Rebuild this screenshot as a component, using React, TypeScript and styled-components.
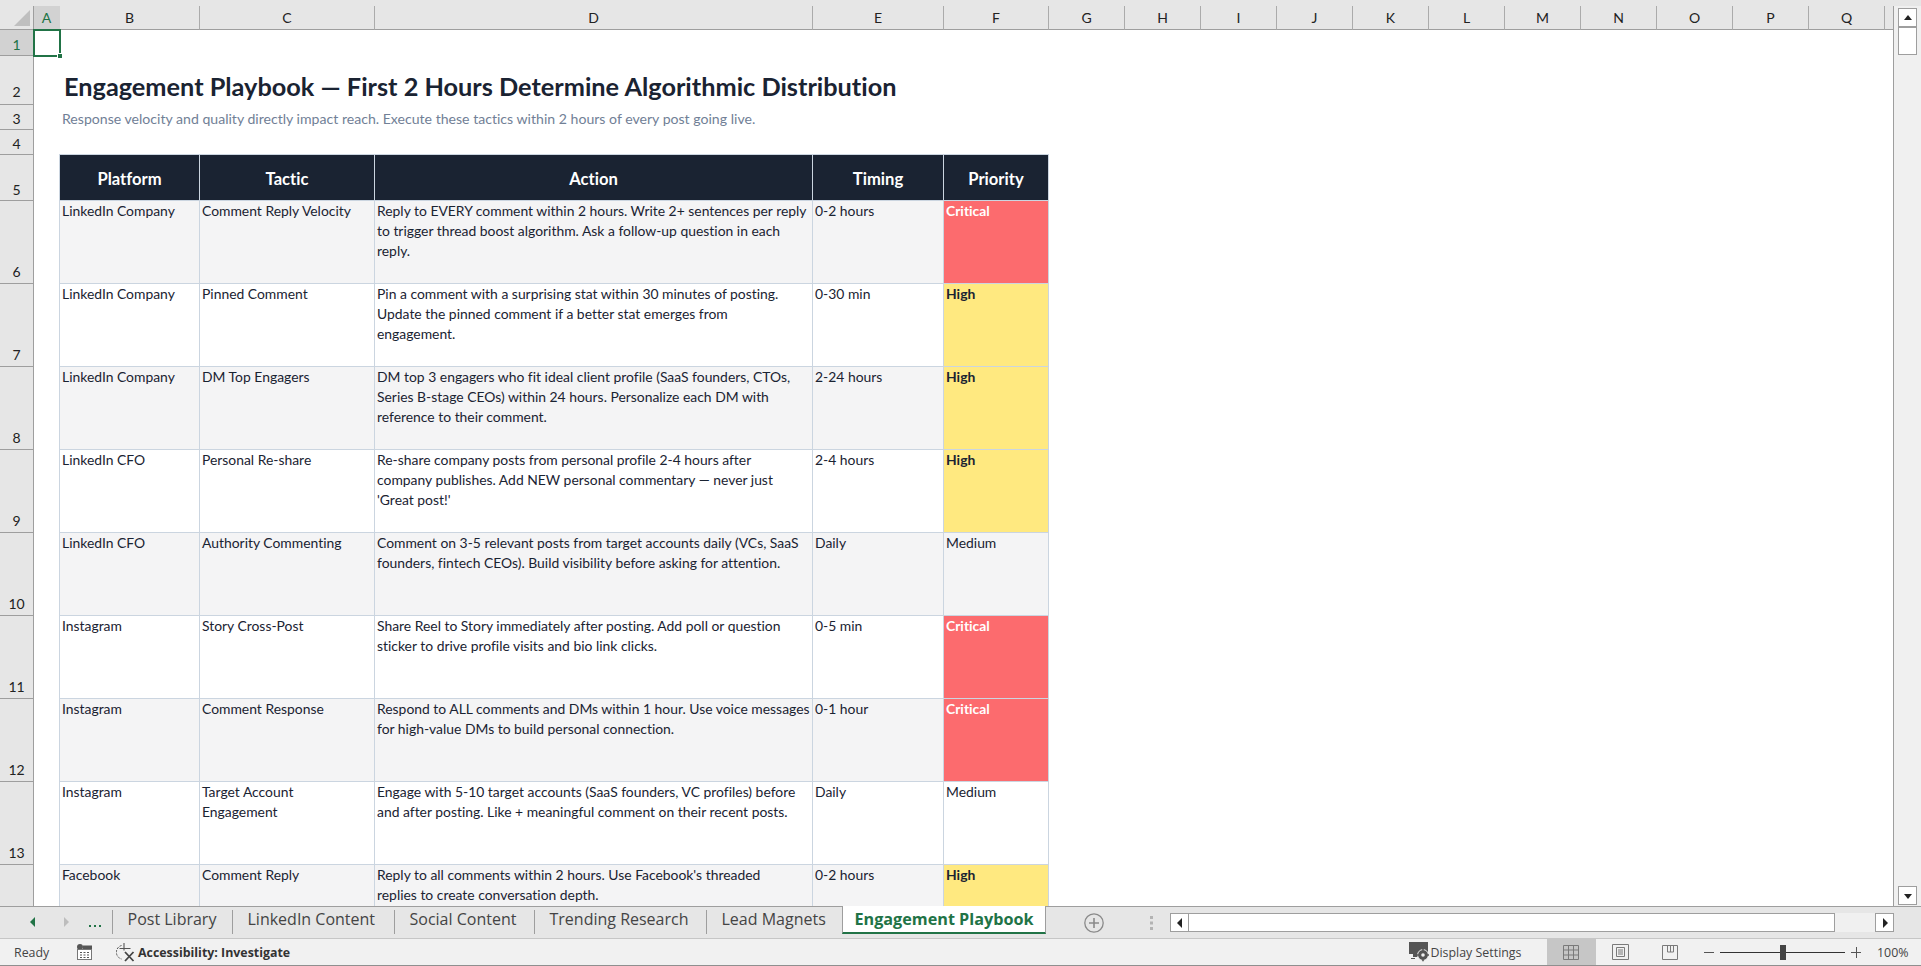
import React from 'react';
import styled, { createGlobalStyle, css } from 'styled-components';

const CELL_FONT = '"Lato", "Liberation Sans", sans-serif';
const UI_FONT = '"Open Sans", "Noto Sans", sans-serif';
const GREEN = '#217346';
const BORDER = '#cbd5e0';

type Priority = 'Critical' | 'High' | 'Medium';

interface IPlay {
    platform: string;
    tactic: string;
    action: string;
    timing: string;
    priority: Priority;
}

const COLUMNS = ['A', 'B', 'C', 'D', 'E', 'F', 'G', 'H', 'I', 'J', 'K', 'L', 'M', 'N', 'O', 'P', 'Q'];
const HEADINGS = ['Platform', 'Tactic', 'Action', 'Timing', 'Priority'];
const TABS = [
    { name: 'Post Library', width: 120 },
    { name: 'LinkedIn Content', width: 162 },
    { name: 'Social Content', width: 140 },
    { name: 'Trending Research', width: 172 },
    { name: 'Lead Magnets', width: 136 },
];

const PLAYS: IPlay[] = [
    {
        platform: 'LinkedIn Company',
        tactic: 'Comment Reply Velocity',
        action: 'Reply to EVERY comment within 2 hours. Write 2+ sentences per reply\nto trigger thread boost algorithm. Ask a follow-up question in each\nreply.',
        timing: '0-2 hours',
        priority: 'Critical',
    },
    {
        platform: 'LinkedIn Company',
        tactic: 'Pinned Comment',
        action: 'Pin a comment with a surprising stat within 30 minutes of posting.\nUpdate the pinned comment if a better stat emerges from\nengagement.',
        timing: '0-30 min',
        priority: 'High',
    },
    {
        platform: 'LinkedIn Company',
        tactic: 'DM Top Engagers',
        action: 'DM top 3 engagers who fit ideal client profile (SaaS founders, CTOs,\nSeries B-stage CEOs) within 24 hours. Personalize each DM with\nreference to their comment.',
        timing: '2-24 hours',
        priority: 'High',
    },
    {
        platform: 'LinkedIn CFO',
        tactic: 'Personal Re-share',
        action: "Re-share company posts from personal profile 2-4 hours after\ncompany publishes. Add NEW personal commentary — never just\n'Great post!'",
        timing: '2-4 hours',
        priority: 'High',
    },
    {
        platform: 'LinkedIn CFO',
        tactic: 'Authority Commenting',
        action: 'Comment on 3-5 relevant posts from target accounts daily (VCs, SaaS\nfounders, fintech CEOs). Build visibility before asking for attention.',
        timing: 'Daily',
        priority: 'Medium',
    },
    {
        platform: 'Instagram',
        tactic: 'Story Cross-Post',
        action: 'Share Reel to Story immediately after posting. Add poll or question\nsticker to drive profile visits and bio link clicks.',
        timing: '0-5 min',
        priority: 'Critical',
    },
    {
        platform: 'Instagram',
        tactic: 'Comment Response',
        action: 'Respond to ALL comments and DMs within 1 hour. Use voice messages\nfor high-value DMs to build personal connection.',
        timing: '0-1 hour',
        priority: 'Critical',
    },
    {
        platform: 'Instagram',
        tactic: 'Target Account\nEngagement',
        action: 'Engage with 5-10 target accounts (SaaS founders, VC profiles) before\nand after posting. Like + meaningful comment on their recent posts.',
        timing: 'Daily',
        priority: 'Medium',
    },
    {
        platform: 'Facebook',
        tactic: 'Comment Reply',
        action: "Reply to all comments within 2 hours. Use Facebook's threaded\nreplies to create conversation depth.",
        timing: '0-2 hours',
        priority: 'High',
    },
];

const GlobalStyle = createGlobalStyle`
    html, body {
        margin: 0;
        padding: 0;
        background: #e6e6e6;
    }
`;

const Window = styled.div`
    width: 1921px;
    height: 966px;
    display: flex;
    flex-direction: column;
    overflow: hidden;
    background: #e6e6e6;
`;

const Workspace = styled.div`
    flex: 0 0 907px;
    display: flex;
    padding-top: 6px;
    box-sizing: border-box;
    border-bottom: 1px solid #9e9e9e;
`;

const Sheet = styled.div`
    width: 1894px;
    height: 900px;
    overflow: hidden;
    display: grid;
    grid-template-columns: 34px 26px 140px 175px 438px 131px 105px repeat(11, 76px) 8px;
    grid-template-rows: 24px 26px 49px 25px 25px 46px repeat(9, 83px);
    background: #fff;
    border-right: 1px solid #9e9e9e;
    box-sizing: border-box;
    font-family: ${CELL_FONT};
    font-variant-ligatures: none;
`;

const Corner = styled.div`
    background: #e6e6e6;
    border-right: 1px solid #9e9e9e;
    border-bottom: 1px solid #9e9e9e;
    position: relative;

    &::after {
        content: '';
        position: absolute;
        right: 3px;
        bottom: 3px;
        border-style: solid;
        border-width: 0 0 16px 16px;
        border-color: transparent transparent #bfbfbf transparent;
    }
`;

const ColumnHeader = styled.div<{ $active?: boolean }>`
    display: flex;
    align-items: center;
    justify-content: center;
    font-size: 14px;
    color: ${(p) => (p.$active ? GREEN : '#222')};
    background: ${(p) => (p.$active ? '#d2d2d2' : '#e6e6e6')};
    border-right: 1px solid ${(p) => (p.$active ? '#d2d2d2' : '#ababab')};
    border-bottom: 1px solid ${(p) => (p.$active ? GREEN : '#9e9e9e')};
`;

const EndHeader = styled.div`
    background: #e6e6e6;
    border-bottom: 1px solid #9e9e9e;
`;

const RowHeader = styled.div<{ $active?: boolean; $raise?: number }>`
    display: flex;
    align-items: flex-end;
    justify-content: center;
    box-sizing: border-box;
    padding-bottom: ${(p) => p.$raise || 0}px;
    font-size: 14px;
    line-height: 20px;
    color: ${(p) => (p.$active ? GREEN : '#222')};
    background: ${(p) => (p.$active ? '#d2d2d2' : '#e6e6e6')};
    border-right: 1px solid #9e9e9e;
    border-bottom: 1px solid #9e9e9e;
`;

const Gutter = styled.div``;

const EmptyCells = styled.div<{ $from: number }>`
    grid-column: ${(p) => p.$from} / -1;
`;

const SelectedCell = styled.div`
    position: relative;

    &::before {
        content: '';
        position: absolute;
        left: -1px;
        top: -1px;
        right: -1px;
        bottom: -1px;
        border: 2px solid ${GREEN};
    }

    &::after {
        content: '';
        position: absolute;
        right: -3px;
        bottom: -3px;
        width: 6px;
        height: 6px;
        background: ${GREEN};
        border: 1px solid #fff;
        box-sizing: border-box;
    }
`;

const TitleCell = styled.div`
    grid-column: 3 / span 5;
    display: flex;
    align-items: flex-end;
    padding: 0 0 4px 4px;
    font-size: 25.3px;
    line-height: 30px;
    font-weight: 700;
    color: #1a2332;
    white-space: nowrap;
`;

const SubtitleCell = styled.div`
    grid-column: 3 / span 5;
    padding: 4px 0 0 2px;
    font-size: 14.1px;
    line-height: 20px;
    color: #718096;
    white-space: nowrap;
`;

const tableEdges = css<{ $first?: boolean }>`
    border-right: 1px solid ${BORDER};
    border-bottom: 1px solid ${BORDER};
    ${(p) => p.$first && `box-shadow: -1px 0 0 ${BORDER};`}
`;

const HeadingCell = styled.div<{ $first?: boolean }>`
    display: flex;
    align-items: center;
    justify-content: center;
    box-sizing: border-box;
    padding-top: 2px;
    font-size: 16.6px;
    font-weight: 700;
    color: #fff;
    background: #1a2332;
    border-top: 1px solid ${BORDER};
    margin-top: -1px;
    ${tableEdges}
`;

const BodyCell = styled.div<{ $first?: boolean; $striped?: boolean }>`
    padding: 0 2px;
    font-size: 13.9px;
    line-height: 20px;
    color: #1a2332;
    white-space: pre;
    overflow: hidden;
    background: ${(p) => (p.$striped ? '#f4f4f5' : '#fff')};
    ${tableEdges}
`;

const PriorityCell = styled(BodyCell)<{ $level: Priority }>`
    ${(p) =>
        p.$level === 'Critical' &&
        css`
            background: #fc6b6e;
            color: #fff;
            font-weight: 700;
        `}
    ${(p) =>
        p.$level === 'High' &&
        css`
            background: #ffe980;
            font-weight: 700;
        `}
`;

const VerticalBar = styled.div`
    flex: 1;
    display: flex;
    flex-direction: column;
    align-items: center;
    padding: 2px 0 1px;
    box-sizing: border-box;
    background: #f0f0f0;
`;

const ScrollButton = styled.div`
    width: 19px;
    height: 19px;
    flex: none;
    box-sizing: border-box;
    display: flex;
    align-items: center;
    justify-content: center;
    background: #fff;
    border: 1px solid #9e9e9e;
`;

const VerticalThumb = styled.div`
    width: 19px;
    height: 28px;
    box-sizing: border-box;
    background: #fff;
    border: 1px solid #9e9e9e;
    margin-bottom: auto;
`;

const TabBar = styled.div`
    flex: 0 0 31px;
    display: flex;
    align-items: flex-start;
    box-sizing: border-box;
    background: #e6e6e6;
    font-family: ${UI_FONT};
`;

const TabNav = styled.div`
    width: 112px;
    height: 24px;
    margin-top: 3px;
    flex: none;
    display: flex;
    align-items: center;
    box-sizing: border-box;
    padding-left: 30px;
`;

const NavArrow = styled.svg`
    flex: none;
    width: 5px;
    height: 10px;
    margin-right: 29px;
`;

const Ellipsis = styled.div`
    margin-left: -9px;
    display: flex;
    gap: 3px;
    margin-top: 8px;
`;

const EllipsisDot = styled.span`
    width: 2px;
    height: 2px;
    background: ${GREEN};
`;

const Tab = styled.div<{ $width: number }>`
    display: flex;
    align-items: center;
    flex: none;
    width: ${(p) => p.$width}px;
    height: 24px;
    margin-top: 3px;
    padding: 0 0 6px 14.5px;
    box-sizing: border-box;
    font-size: 16px;
    color: #444;
    border-left: 1px solid #9e9e9e;
    white-space: nowrap;
`;

const ActiveTab = styled.div`
    display: flex;
    align-items: center;
    justify-content: center;
    flex: none;
    width: 204px;
    height: 28px;
    margin-top: -1px;
    box-sizing: border-box;
    font-size: 16.2px;
    font-weight: 700;
    color: ${GREEN};
    background: #fff;
    border-left: 1px solid #9e9e9e;
    border-right: 1px solid #9e9e9e;
    border-bottom: 2px solid ${GREEN};
    white-space: nowrap;
`;

const SheetTools = styled.div`
    width: 124px;
    height: 20px;
    margin-top: 6px;
    flex: none;
    display: flex;
    align-items: center;
    gap: 46px;
    padding-left: 38px;
    box-sizing: border-box;
`;

const HorizontalBar = styled.div`
    width: 724px;
    height: 19px;
    margin-top: 6px;
    flex: none;
    display: flex;
    background: #f0f0f0;
`;

const HorizontalThumb = styled.div`
    width: 646px;
    height: 19px;
    box-sizing: border-box;
    background: #fff;
    border: 1px solid #9e9e9e;
    border-left: 0;
    margin-right: auto;
`;

const StatusBar = styled.div`
    flex: 0 0 28px;
    display: flex;
    align-items: center;
    box-sizing: border-box;
    padding-left: 14px;
    background: #f1f1f1;
    border-top: 1px solid #c6c6c6;
    border-bottom: 1px solid #8f8f8f;
    font-family: ${UI_FONT};
    font-size: 12.4px;
    color: #444;
`;

const Ready = styled.span`
    width: 63px;
    flex: none;
`;

const StatusIcon = styled.span<{ $gap?: number }>`
    display: flex;
    align-items: center;
    flex: none;
    margin-right: ${(p) => p.$gap || 0}px;
`;

const Accessibility = styled.span`
    font-weight: 700;
    color: #333;
    margin-left: 3px;
    font-size: 12.4px;
`;

const Spacer = styled.div`
    flex: 1;
`;

const DisplaySettings = styled.span`
    width: 116px;
    flex: none;
`;

const ViewButton = styled.div<{ $active?: boolean }>`
    width: 49.5px;
    flex: none;
    align-self: stretch;
    display: flex;
    align-items: center;
    justify-content: center;
    background: ${(p) => (p.$active ? '#c6c6c6' : 'transparent')};
`;

const ZoomBox = styled.div`
    display: flex;
    align-items: center;
    flex: none;
    margin-left: 9px;
    gap: 6px;
`;

const ZoomStep = styled.span`
    width: 10px;
    height: 11px;
    flex: none;
    position: relative;

    &::before {
        content: '';
        position: absolute;
        left: 0;
        right: 0;
        top: 5px;
        height: 1px;
        background: #555;
    }
`;

const ZoomPlus = styled(ZoomStep)`
    &::after {
        content: '';
        position: absolute;
        left: 5px;
        top: 0;
        bottom: 0;
        width: 1px;
        background: #555;
    }
`;

const ZoomTrack = styled.div`
    width: 125px;
    height: 1px;
    flex: none;
    background: #333;
    position: relative;
`;

const ZoomThumb = styled.div`
    position: absolute;
    left: 60px;
    top: -7px;
    width: 6px;
    height: 15px;
    background: #444;
`;

const ZoomLabel = styled.span`
    margin-left: 16px;
    width: 44px;
    flex: none;
`;

const Triangle: React.FC<{ dir: 'up' | 'down' | 'left' | 'right' }> = ({ dir }) => {
    const points = {
        up: '1,7 9,7 5,2',
        down: '1,3 9,3 5,8',
        left: '7,0 7,10 2,5',
        right: '3,0 3,10 8,5',
    }[dir];

    return (
        <svg width="10" height="10" viewBox="0 0 10 10">
            <polygon points={points} fill="#222" />
        </svg>
    );
};

const AddIcon = () => (
    <svg width="20" height="20" viewBox="0 0 20 20" fill="none" stroke="#8a8a8a">
        <circle cx="10" cy="10" r="9.2" strokeWidth="1.3" />
        <path d="M10 5v10M5 10h10" strokeWidth="1.6" />
    </svg>
);

const DotsIcon = () => (
    <svg width="3" height="14" viewBox="0 0 3 14" fill="#b3b3b3">
        <rect x="0" y="0" width="3" height="3" />
        <rect x="0" y="5.5" width="3" height="3" />
        <rect x="0" y="11" width="3" height="3" />
    </svg>
);

const MacroIcon = () => (
    <svg width="15" height="16" viewBox="0 0 15 16" fill="none">
        <circle cx="3" cy="3" r="3" fill="#555" />
        <rect x="6" y="1.5" width="9" height="3.5" fill="#555" />
        <rect x="0.5" y="5.5" width="14" height="10" fill="#fff" stroke="#777" />
        <path d="M3 8.5h2M6.5 8.5h2M10 8.5h2M3 11h2M6.5 11h2M10 11h2M3 13.5h2M6.5 13.5h2M10 13.5h2" stroke="#555" />
    </svg>
);

const AccessibilityIcon = () => (
    <svg width="19" height="19" viewBox="0 0 19 19" fill="none" stroke="#555">
        <path d="M5.5 2.5A7 7 0 0 0 5.5 16" strokeDasharray="2.2 1.2" />
        <path d="M8 0v7.5M3.5 5.5h11" strokeWidth="1.1" />
        <path d="M9 9l8.5 9M17.5 9L9 18" stroke="#444" strokeWidth="1.8" />
    </svg>
);

const DisplayIcon = () => (
    <svg width="20" height="20" viewBox="0 0 20 20">
        <path d="M0 0h19v12H9v3H4v1H6v1H2v-1H4v-4H0z" fill="#555" />
        <circle cx="14" cy="13" r="5.4" fill="#555" stroke="#f1f1f1" />
        <circle cx="14" cy="13" r="1.8" fill="#f1f1f1" />
        <path d="M14 6.8v2M14 17.2v2M7.8 13h2M18.2 13h2" stroke="#555" strokeWidth="1.6" />
    </svg>
);

const NormalViewIcon = () => (
    <svg width="16" height="15" viewBox="0 0 16 15" fill="none" stroke="#7a7a7a">
        <path d="M.5.5h15v14H.5zM5.5.5v14M10.5.5v14M.5 5h15M.5 10h15" />
    </svg>
);

const PageViewIcon = () => (
    <svg width="17" height="16" viewBox="0 0 17 16" fill="none" stroke="#7a7a7a">
        <path d="M.5.5h16v15H.5zM4.5 3.5h8v9h-8zM6 6h5M6 8h5M6 10h5" />
    </svg>
);

const BreakViewIcon = () => (
    <svg width="16" height="15" viewBox="0 0 16 15" fill="none" stroke="#7a7a7a">
        <path d="M.5.5h15v14H.5zM5.5.5v6.5h6V.5M8.5.5v6.5" />
    </svg>
);

export default function App() {
    return (
        <Window>
            <GlobalStyle />
            <Workspace>
                <Sheet>
                    <Corner />
                    {COLUMNS.map((column, index) => (
                        <ColumnHeader key={column} $active={index === 0}>
                            {column}
                        </ColumnHeader>
                    ))}
                    <EndHeader />

                    <RowHeader $active>1</RowHeader>
                    <SelectedCell />
                    <EmptyCells $from={3} />

                    <RowHeader $raise={2}>2</RowHeader>
                    <Gutter />
                    <TitleCell>Engagement Playbook — First 2 Hours Determine Algorithmic Distribution</TitleCell>
                    <EmptyCells $from={8} />

                    <RowHeader>3</RowHeader>
                    <Gutter />
                    <SubtitleCell>
                        Response velocity and quality directly impact reach. Execute these tactics within 2 hours of every post going live.
                    </SubtitleCell>
                    <EmptyCells $from={8} />

                    <RowHeader>4</RowHeader>
                    <EmptyCells $from={2} />

                    <RowHeader>5</RowHeader>
                    <Gutter />
                    {HEADINGS.map((heading, index) => (
                        <HeadingCell key={heading} $first={index === 0}>
                            {heading}
                        </HeadingCell>
                    ))}
                    <EmptyCells $from={8} />

                    {PLAYS.map((play, index) => {
                        const striped = index % 2 === 0;

                        return (
                            <React.Fragment key={play.tactic + index}>
                                <RowHeader $raise={1}>{index + 6}</RowHeader>
                                <Gutter />
                                <BodyCell $first $striped={striped}>
                                    {play.platform}
                                </BodyCell>
                                <BodyCell $striped={striped}>{play.tactic}</BodyCell>
                                <BodyCell $striped={striped}>{play.action}</BodyCell>
                                <BodyCell $striped={striped}>{play.timing}</BodyCell>
                                <PriorityCell $striped={striped} $level={play.priority}>
                                    {play.priority}
                                </PriorityCell>
                                <EmptyCells $from={8} />
                            </React.Fragment>
                        );
                    })}
                </Sheet>
                <VerticalBar>
                    <ScrollButton>
                        <Triangle dir="up" />
                    </ScrollButton>
                    <VerticalThumb />
                    <ScrollButton>
                        <Triangle dir="down" />
                    </ScrollButton>
                </VerticalBar>
            </Workspace>

            <TabBar>
                <TabNav>
                    <NavArrow viewBox="0 0 5 10">
                        <polygon points="5,0 5,10 0,5" fill={GREEN} />
                    </NavArrow>
                    <NavArrow viewBox="0 0 5 10">
                        <polygon points="0,0 0,10 5,5" fill="#bdbdbd" />
                    </NavArrow>
                    <Ellipsis>
                        <EllipsisDot />
                        <EllipsisDot />
                        <EllipsisDot />
                    </Ellipsis>
                </TabNav>
                {TABS.map((tab) => (
                    <Tab key={tab.name} $width={tab.width}>
                        {tab.name}
                    </Tab>
                ))}
                <ActiveTab>Engagement Playbook</ActiveTab>
                <SheetTools>
                    <AddIcon />
                    <DotsIcon />
                </SheetTools>
                <HorizontalBar>
                    <ScrollButton>
                        <Triangle dir="left" />
                    </ScrollButton>
                    <HorizontalThumb />
                    <ScrollButton>
                        <Triangle dir="right" />
                    </ScrollButton>
                </HorizontalBar>
            </TabBar>

            <StatusBar>
                <Ready>Ready</Ready>
                <StatusIcon $gap={24}>
                    <MacroIcon />
                </StatusIcon>
                <StatusIcon>
                    <AccessibilityIcon />
                </StatusIcon>
                <Accessibility>Accessibility: Investigate</Accessibility>
                <Spacer />
                <StatusIcon $gap={2}>
                    <DisplayIcon />
                </StatusIcon>
                <DisplaySettings>Display Settings</DisplaySettings>
                <ViewButton $active>
                    <NormalViewIcon />
                </ViewButton>
                <ViewButton>
                    <PageViewIcon />
                </ViewButton>
                <ViewButton>
                    <BreakViewIcon />
                </ViewButton>
                <ZoomBox>
                    <ZoomStep />
                    <ZoomTrack>
                        <ZoomThumb />
                    </ZoomTrack>
                    <ZoomPlus />
                </ZoomBox>
                <ZoomLabel>100%</ZoomLabel>
            </StatusBar>
        </Window>
    );
}
